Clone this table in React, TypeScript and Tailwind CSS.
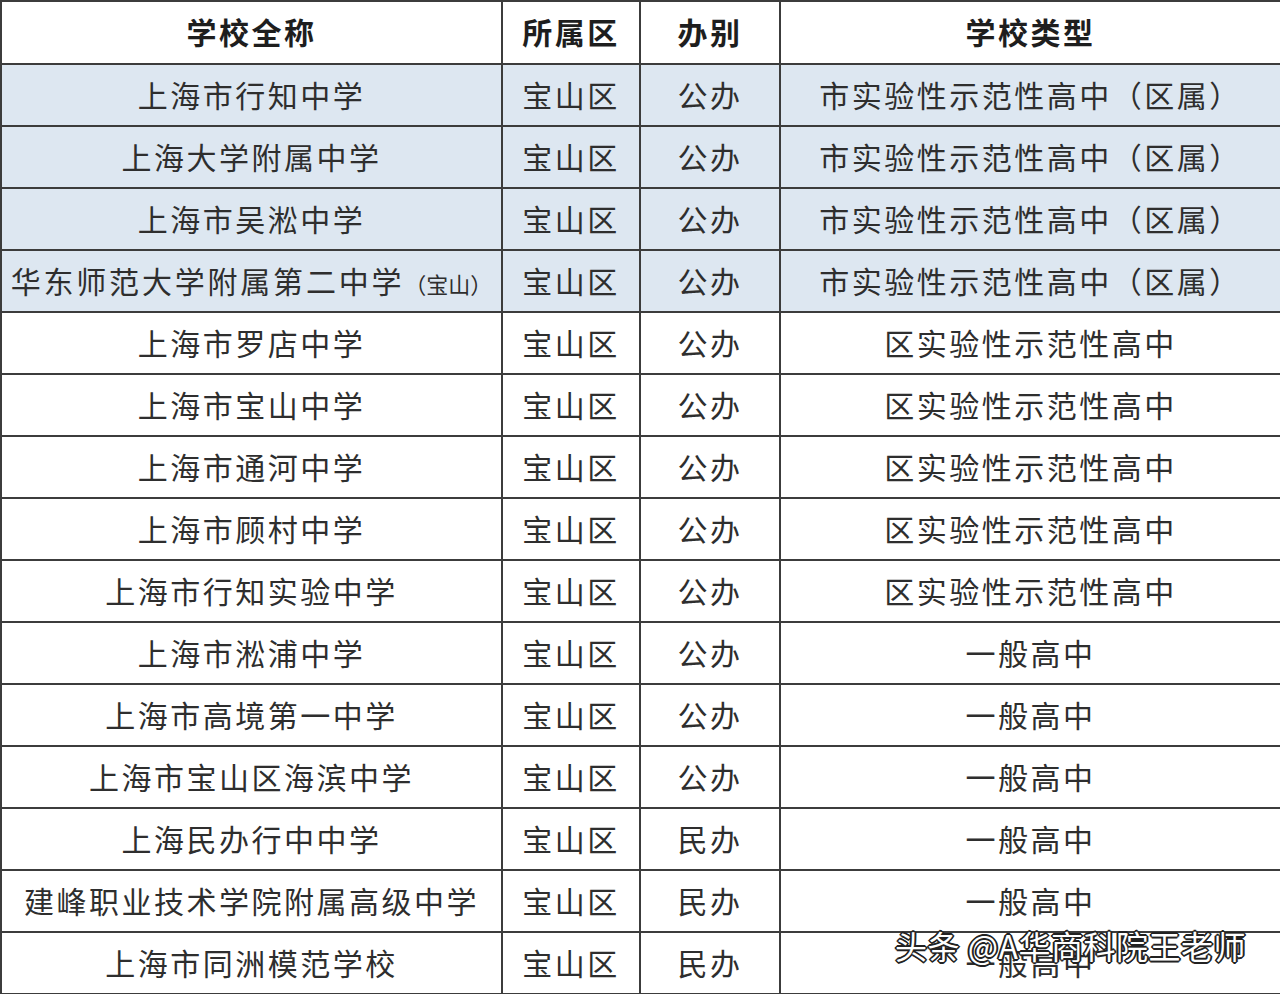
import React from 'react'

type Row = { name: string; note?: string; district: string; kind: string; type: string; hl?: boolean }

const rows: Row[] = [
  { name: '上海市行知中学', district: '宝山区', kind: '公办', type: '市实验性示范性高中（区属）', hl: true },
  { name: '上海大学附属中学', district: '宝山区', kind: '公办', type: '市实验性示范性高中（区属）', hl: true },
  { name: '上海市吴淞中学', district: '宝山区', kind: '公办', type: '市实验性示范性高中（区属）', hl: true },
  { name: '华东师范大学附属第二中学', note: '（宝山）', district: '宝山区', kind: '公办', type: '市实验性示范性高中（区属）', hl: true },
  { name: '上海市罗店中学', district: '宝山区', kind: '公办', type: '区实验性示范性高中' },
  { name: '上海市宝山中学', district: '宝山区', kind: '公办', type: '区实验性示范性高中' },
  { name: '上海市通河中学', district: '宝山区', kind: '公办', type: '区实验性示范性高中' },
  { name: '上海市顾村中学', district: '宝山区', kind: '公办', type: '区实验性示范性高中' },
  { name: '上海市行知实验中学', district: '宝山区', kind: '公办', type: '区实验性示范性高中' },
  { name: '上海市淞浦中学', district: '宝山区', kind: '公办', type: '一般高中' },
  { name: '上海市高境第一中学', district: '宝山区', kind: '公办', type: '一般高中' },
  { name: '上海市宝山区海滨中学', district: '宝山区', kind: '公办', type: '一般高中' },
  { name: '上海民办行中中学', district: '宝山区', kind: '民办', type: '一般高中' },
  { name: '建峰职业技术学院附属高级中学', district: '宝山区', kind: '民办', type: '一般高中' },
  { name: '上海市同洲模范学校', district: '宝山区', kind: '民办', type: '一般高中' },
]

const cell = 'border-2 border-[#3c3c3c] text-center align-middle whitespace-nowrap p-0 pb-[3px]'

export default function App() {
  return (
    <div
      className="relative w-[1280px] h-[994px] overflow-hidden bg-white text-[#2e2e2e]"
      style={{ fontFamily: '"Noto Sans CJK SC", "Noto Sans", sans-serif' }}
    >
      <table className="w-[1280px] table-fixed border-collapse text-[30px] tracking-[2.5px] leading-none">
        <colgroup>
          <col className="w-[501px]" />
          <col className="w-[138px]" />
          <col className="w-[140px]" />
          <col className="w-[501px]" />
        </colgroup>
        <thead>
          <tr className="h-[63px] font-bold text-[#1e1e1e]">
            <th className={cell}>学校全称</th>
            <th className={cell}>所属区</th>
            <th className={cell}>办别</th>
            <th className={cell}>学校类型</th>
          </tr>
        </thead>
        <tbody>
          {rows.map((r) => (
            <tr key={r.name} className={`h-[62px] ${r.hl ? 'bg-[#dde7f1]' : 'bg-white'}`}>
              <td className={r.note ? `${cell} tracking-[2.8px]` : cell}>
                {r.name}
                {r.note && <span className="text-[22px] tracking-normal">{r.note}</span>}
              </td>
              <td className={cell}>{r.district}</td>
              <td className={cell}>{r.kind}</td>
              <td className={cell}>{r.type}</td>
            </tr>
          ))}
        </tbody>
      </table>

      {/* watermark */}
      <div
        className="absolute left-[895px] top-[929px] text-[32px] tracking-[0.5px] leading-none text-white whitespace-nowrap"
        style={{
          textShadow:
            '-2px 0 #222, 2px 0 #222, 0 -2px #222, 0 2px #222, -1px -1px #222, 1px 1px #222, -1px 1px #222, 1px -1px #222',
        }}
      >
        头条 @A华商科院王老师
      </div>
    </div>
  )
}
